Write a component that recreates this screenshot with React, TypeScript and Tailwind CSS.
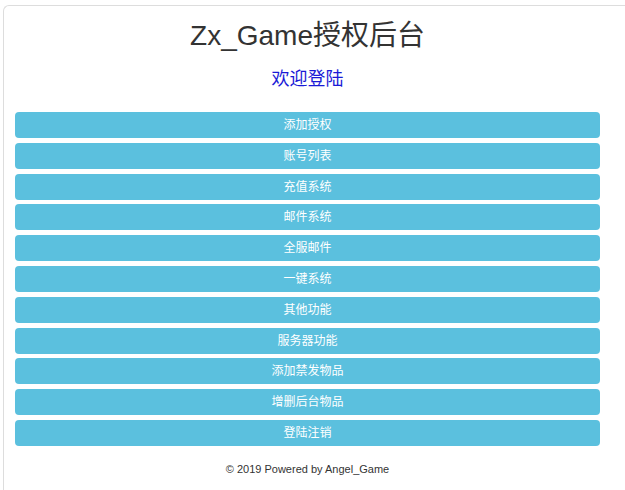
const menu = [
  '添加授权',
  '账号列表',
  '充值系统',
  '邮件系统',
  '全服邮件',
  '一键系统',
  '其他功能',
  '服务器功能',
  '添加禁发物品',
  '增删后台物品',
  '登陆注销',
]

export default function App() {
  return (
    <div
      className="min-h-[490px] bg-white pl-[3px] pt-[5px] overflow-hidden"
      style={{ fontFamily: '"Liberation Sans", Arial, "Noto Sans CJK SC", sans-serif' }}
    >
      <div className="min-h-[485px] w-[640px] rounded-tl-md border-l border-t border-[#dddddd] bg-white pl-[11px] pt-[14px]">
        {/* header */}
        <div className="w-[585px] text-center">
          <h2 className="text-[28px] leading-[32px] text-[#333333]">Zx_Game授权后台</h2>
          <h4 className="mt-[14px] text-[18px] leading-[26px] text-[#1a1ad6]">欢迎登陆</h4>
        </div>

        {/* menu buttons */}
        <div className="mt-[20px] flex w-[585px] flex-col gap-[4.8px]">
          {menu.map((item) => (
            <button
              key={item}
              className="flex h-[26px] items-center justify-center rounded-[4px] bg-[#5bc0de] text-[12px] text-white"
            >
              {item}
            </button>
          ))}
        </div>

        {/* footer */}
        <p className="mt-[15px] w-[585px] text-center text-[11px] leading-[16px] text-[#333333]">
          © 2019 Powered by Angel_Game
        </p>
      </div>
    </div>
  )
}
